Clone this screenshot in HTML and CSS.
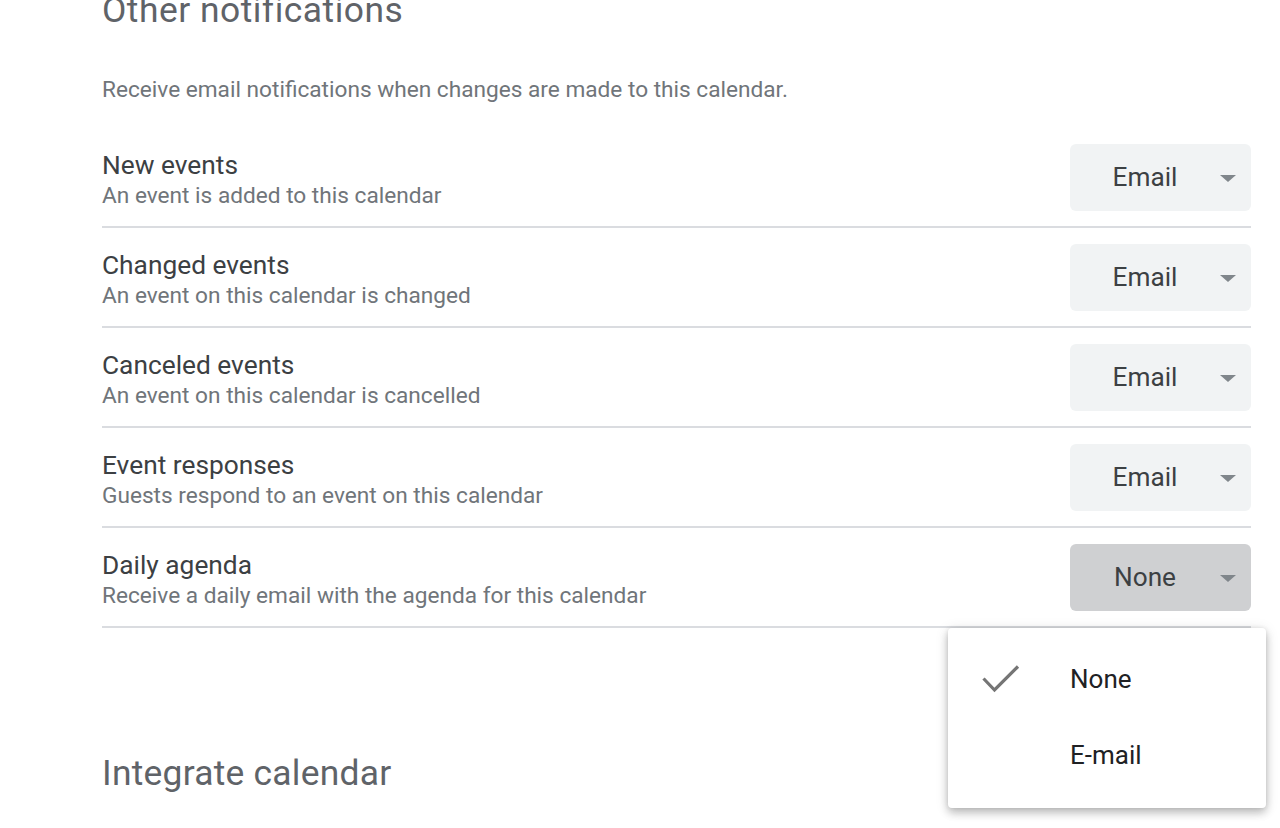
FILE: index.html
```html
<!DOCTYPE html>
<html lang="en">
<head>
<meta charset="utf-8">
<title>Other notifications</title>
<link rel="stylesheet" href="styles.css">
</head>
<body>
<main class="page">
  <h2 class="section-title first">Other notifications</h2>
  <p class="section-desc">Receive email notifications when changes are made to this calendar.</p>
  <ul class="rows">
    <li class="row">
      <div class="row-text">
        <div class="row-title">New events</div>
        <div class="row-sub">An event is added to this calendar</div>
      </div>
      <div class="select"><span class="select-value">Email</span><span class="select-arrow"></span></div>
    </li>
    <li class="row">
      <div class="row-text">
        <div class="row-title">Changed events</div>
        <div class="row-sub">An event on this calendar is changed</div>
      </div>
      <div class="select"><span class="select-value">Email</span><span class="select-arrow"></span></div>
    </li>
    <li class="row">
      <div class="row-text">
        <div class="row-title">Canceled events</div>
        <div class="row-sub">An event on this calendar is cancelled</div>
      </div>
      <div class="select"><span class="select-value">Email</span><span class="select-arrow"></span></div>
    </li>
    <li class="row">
      <div class="row-text">
        <div class="row-title">Event responses</div>
        <div class="row-sub">Guests respond to an event on this calendar</div>
      </div>
      <div class="select"><span class="select-value">Email</span><span class="select-arrow"></span></div>
    </li>
    <li class="row">
      <div class="row-text">
        <div class="row-title">Daily agenda</div>
        <div class="row-sub">Receive a daily email with the agenda for this calendar</div>
      </div>
      <div class="select is-open"><span class="select-value">None</span><span class="select-arrow"></span></div>
    </li>
  </ul>
  <h2 class="section-title second">Integrate calendar</h2>
</main>
<div class="menu" role="listbox">
  <div class="menu-item is-selected">
    <svg class="menu-check" width="40" height="30" viewBox="0 0 40 30" aria-hidden="true"><polyline points="1.5,13.5 12.5,25 36,1.5" fill="none" stroke="#757575" stroke-width="3.2"/></svg>
    <span class="menu-label">None</span>
  </div>
  <div class="menu-item">
    <span class="menu-label">E-mail</span>
  </div>
</div>
</body>
</html>
```
FILE: styles.css
```css
* { box-sizing: border-box; }
html, body { margin: 0; padding: 0; background: #fff; }
body {
  font-family: Roboto, "Liberation Sans", Arial, sans-serif;
  width: 1280px;
  height: 828px;
  overflow: hidden;
  position: relative;
}
.page {
  padding-left: 102px;
  width: 1251px;
}
.section-title {
  margin: 0;
  font-weight: 400;
  font-size: 35.4px;
  line-height: 44px;
  color: #5f6368;
  letter-spacing: 0.2px;
}
.section-title.first { margin-top: -12px; letter-spacing: 0.5px; }
.section-title.second { margin-top: 123px; letter-spacing: 0.25px; }
.section-desc {
  margin: 42px 0 0;
  font-size: 22.65px;
  line-height: 32px;
  color: #70757a;
}
.rows {
  list-style: none;
  margin: 22px 0 0;
  padding: 0;
}
.row {
  display: flex;
  align-items: center;
  justify-content: space-between;
  height: 100px;
  padding: 16px 0 15px;
  border-bottom: 2px solid #dadce0;
}
.row-text { display: flex; flex-direction: column; padding-top: 3px; }
.row-title {
  font-size: 26.3px;
  line-height: 32px;
  color: #3c4043;
}
.row-sub {
  font-size: 22.65px;
  line-height: 29px;
  color: #70757a;
}
.select {
  width: 181px;
  height: 67px;
  border-radius: 6px;
  background: #f1f3f4;
  display: flex;
  align-items: center;
  padding-right: 15px;
}
.select.is-open { background: #cfd0d2; }
.select-value {
  flex: 1;
  text-align: center;
  font-size: 26.2px;
  color: #3c4043;
  margin-top: -2px;
}
.select-arrow {
  width: 0;
  height: 0;
  border-left: 8px solid transparent;
  border-right: 8px solid transparent;
  border-top: 7px solid #80868b;
  margin-top: 2px;
}
.menu {
  position: absolute;
  left: 948px;
  top: 628px;
  width: 318px;
  height: 180px;
  background: #fff;
  border-radius: 4px;
  padding: 12.8px 0;
  box-shadow: 0 5px 8px rgba(0,0,0,0.2), 0 2px 14px rgba(0,0,0,0.12), 0 0 4px rgba(0,0,0,0.08);
}
.menu-item {
  position: relative;
  height: 76px;
  display: flex;
  align-items: center;
  padding-left: 122px;
}
.menu-check {
  position: absolute;
  left: 34px;
  top: 24px;
}
.menu-label {
  font-size: 26px;
  color: #202124;
}
```
